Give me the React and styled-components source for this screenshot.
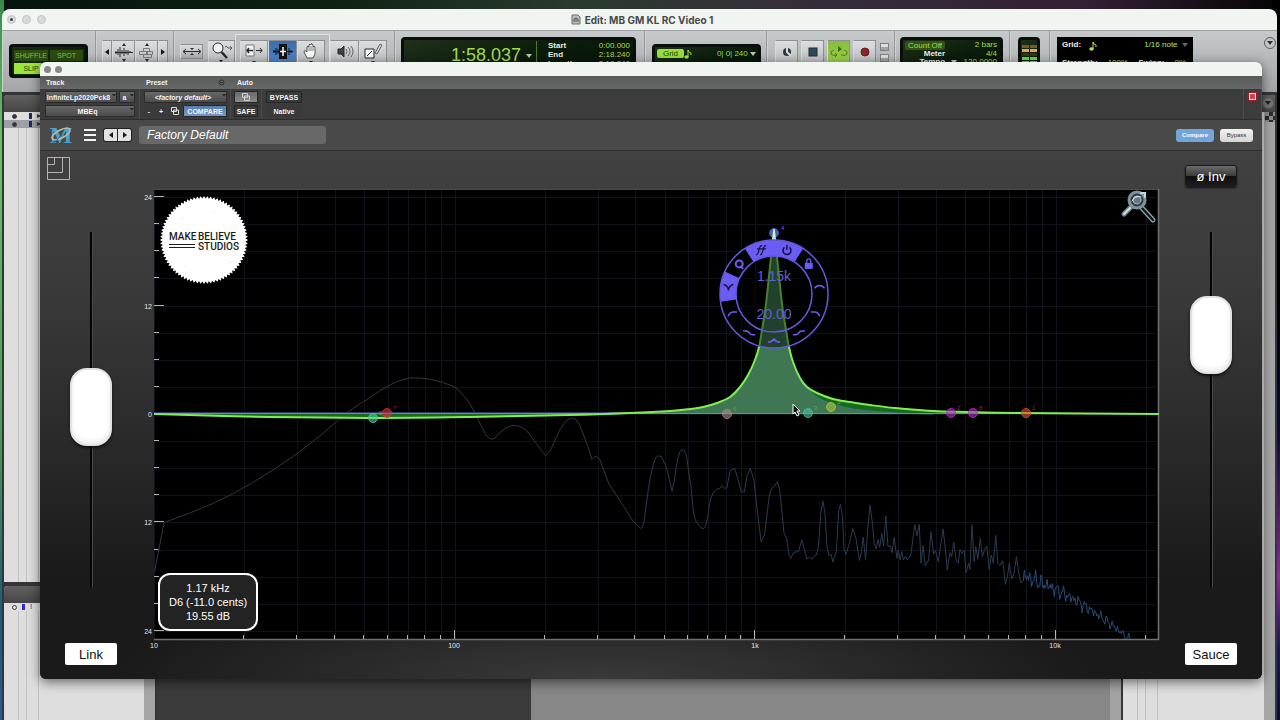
import React from "react";
import styled, { createGlobalStyle, css } from "styled-components";

const GlobalStyle = createGlobalStyle`
    * {
        box-sizing: border-box;
    }
    body {
        margin: 0;
        font-family: "Liberation Sans", Arial, sans-serif;
    }
    button,
    input,
    select {
        margin: 0;
        font-family: inherit;
    }
`;

/* ---------- desktop and windows ---------- */

const Desktop = styled.div`
    position: relative;
    height: 100vh;
    min-height: 480px;
    overflow: hidden;

    background:
        linear-gradient(#3c8a4a, #6cc06a 20%, #4a9a58 60%, #1e5a78 85%, #2a5a96) left / 4px 100% no-repeat,
        linear-gradient(#000 40%, #0b0b38 60%, #7a1a90 76%, #a020a8 80%, #1a1466 90%, #0b0b40) right / 8px 100% no-repeat,
        linear-gradient(90deg, #07140d, #0c2012 25%, #2a3a2e 45%, #35303a 60%, #331f33 85%, #050505) top / 100% 20px no-repeat,
        #101010;
`;
const EditWindow = styled.main`
    position: absolute;
    inset: 9px 3px 0 2px;

    display: flex;
    flex-direction: column;

    border-radius: 8px 8px 0 0;
    overflow: hidden;
`;
const PluginWindow = styled.section`
    position: absolute;
    inset: 62px 18px 41px 40px;

    display: flex;
    flex-direction: column;

    border-radius: 6px;
    overflow: hidden;
    background: #3c3c3c;
    box-shadow: 0 3px 12px rgba(0, 0, 0, 0.55);
`;
const TitleBar = styled.header`
    display: flex;
    align-items: center;
    justify-content: center;
    flex: none;
    height: 21px;

    background: #f0f5f2;
    color: #474a49;
    font-family: Inter, sans-serif;
    font-size: 10px;
    font-weight: 700;
`;
const WindowDots = styled.div`
    display: flex;
    flex: 1;
    gap: 6px;
    padding-left: 5px;
`;
const WindowDot = styled.button`
    width: 9px;
    height: 9px;
    padding: 0;

    display: grid;
    place-items: center;

    border: 1px solid #c0c4c2;
    border-radius: 50%;
    background: #d6dad8;

    &::after {
        content: "";
        width: 3px;
        height: 3px;
        border-radius: 50%;
        background: ${(props) => (props.$marked ? "#444" : "transparent")};
    }
`;
const TitleText = styled.h1`
    display: flex;
    align-items: center;
    gap: 4px;
    margin: 0;
    font-size: inherit;
`;
const TitleSpacer = styled.div`
    flex: 1;
`;

/* ---------- edit window toolbar ---------- */

const EditToolbar = styled.div`
    display: flex;
    flex: none;
    height: 62px;

    border-top: 1px solid #9da1a3;
    background: linear-gradient(#c6cacb, #b4b7b9 50%, #a3a5a7);
`;
const Section = styled.div`
    display: flex;
    align-items: flex-start;
    flex: ${(props) => (props.$grow ? 1 : "none")};
    width: ${(props) => props.$width || "auto"};
    gap: ${(props) => props.$gap || "0"};
    padding: ${(props) => props.$pad || "10px 7px 0"};

    border-right: ${(props) => (props.$grow ? "none" : "1px solid #96999b")};
    box-shadow: inset 1px 0 #cdd0d1;
`;
const Led = styled.div`
    border: 3px solid #0b0f0b;
    border-radius: 4px;
    background: linear-gradient(160deg, #20301a, #0b1c0b 50%, #061206);
    color: #a6dc4e;
    font-size: 8px;
`;
const ModeBox = styled(Led)`
    display: grid;
    grid-template-columns: 36px 1fr;
    width: 81px;
    height: 34px;
    margin-top: 3px;
    padding: 2px 1px;
`;
const ModeButton = styled.button`
    height: 13px;
    padding: 0;

    border: 1px solid #142808;
    background: ${(props) => (props.$on ? "#9be63c" : "#2c4c12")};
    color: ${(props) => (props.$on ? "#1c3a08" : "#86bf3c")};
    font-size: 7px;
    white-space: nowrap;
`;
const ToolButton = styled.button`
    width: ${(props) => props.$width || "23px"};
    height: ${(props) => props.$height || "34px"};
    padding: ${(props) => props.$pad || "2px 0 0"};

    display: flex;
    align-items: flex-start;
    justify-content: center;
    flex: none;

    border: 1px solid #8d9092;
    border-left-color: #d9dcdd;
    background: ${(props) =>
        props.$tone === "blue"
            ? "linear-gradient(#3c6dae, #5a8fcf)"
            : props.$tone === "green"
              ? "linear-gradient(#86bd3a, #a6d850)"
              : "linear-gradient(#dcdedf, #a9acae)"};
    color: #26292b;
`;
const ToolFrame = styled.div`
    display: flex;
    margin-top: -6px;
    padding: 5px 4px 0;

    border: 1px solid #dfe2e3;
    background: #babdbf;
`;
const TrimCell = styled.div`
    flex: 1;
    padding-top: 4px;
`;
const Counter = styled(Led)`
    display: flex;
    width: 100%;
    height: 44px;
    padding: 1px 3px 0 ${(props) => props.$left || "2px"};
`;
const CounterMain = styled.output`
    flex: 1;
    padding: 4px 4px 0 0;

    font-size: 18px;
    line-height: 21px;
    text-align: right;
`;
const SmallArrow = styled.span`
    display: inline-block;
    border: 3px solid transparent;
    border-top: 4px solid ${(props) => props.$color || "#b8c4b0"};
    border-bottom: 0;
    vertical-align: middle;
`;
const CounterList = styled.dl`
    display: grid;
    grid-template-columns: auto auto;
    align-content: start;
    justify-content: space-between;
    width: ${(props) => props.$width || "100%"};
    margin: 0;
    padding: ${(props) => props.$pad || "0"};

    border-left: ${(props) => (props.$line ? "1px solid #4f7a2c" : "none")};
    line-height: ${(props) => (props.$tight ? "8px" : "9px")};

    dt {
        color: #e8ece4;
        font-weight: 700;
        text-align: ${(props) => (props.$tight ? "right" : "left")};
    }
    dd {
        margin: 0;
        text-align: right;
    }
`;
const GridReadout = styled(Led)`
    display: flex;
    align-items: flex-start;
    justify-content: space-between;
    width: 100%;
    height: 34px;
    margin-top: 3px;
    padding: 2px 2px;
    line-height: 9px;
`;
const GridBadge = styled.button`
    width: 27px;
    height: 9px;
    padding: 0;

    border: 0;
    border-radius: 2px;
    background: #97df3e;
    color: #24420c;
    font-size: 8px;
    line-height: 9px;
`;
const TinyBoxes = styled.div`
    display: grid;
    gap: 3px;
    padding: 3px 0 0 1px;

    span {
        width: 9px;
        height: 8px;
        border: 1px solid #7d8082;
        background: linear-gradient(#dcdedf 50%, #a0a3a5 50%);
    }
`;
const CountOff = styled.button`
    display: block;
    height: 9px;
    padding: 0 3px;
    border: 0;
    border-radius: 2px;
    background: #315412;
    color: #a6dc4e;
    font-size: 8px;
    line-height: 9px;
`;
const Meters = styled(Led)`
    display: grid;
    grid-template-columns: 7px 7px;
    grid-auto-rows: 3px;
    gap: 1px;
    justify-content: center;
    width: 22px;
    height: 44px;
    padding-top: 5px;
`;
const MeterCell = styled.i`
    background: ${(props) => props.$color};
`;
const Quantize = styled.div`
    display: grid;
    grid-template-columns: auto 1fr auto;
    align-content: start;
    gap: 8px;
    width: 136px;
    height: 46px;
    padding: 4px 5px;

    background: #000;
    color: #b6e05a;
    font-size: 8px;
    line-height: 8px;

    b {
        color: #f0f0f0;
    }
`;
const QuantizeNote = styled.span`
    text-align: right;
`;
const QuantizeRow = styled.div`
    display: flex;
    justify-content: space-between;
    grid-column: 1 / -1;
    padding-right: 2px;
`;
const RoundMenu = styled.button`
    width: 12px;
    height: 12px;
    margin: 0 0 0 auto;
    padding: 0;

    display: grid;
    place-items: center;

    border: 1px solid #5b5e60;
    border-radius: 50%;
    background: ${(props) => (props.$dark ? "#777" : "#c2c5c6")};
`;

/* ---------- edit window body ---------- */

const EditBody = styled.div`
    display: flex;
    flex: 1;
    min-height: 0;
    gap: 2px;
    padding: 3px 2px 0 2px;
    background: #333537;
`;
const SideColumn = styled.aside`
    display: flex;
    flex-direction: column;
    width: ${(props) => props.$width || "151px"};
    flex: none;
    gap: 4px;
`;
const SidePanel = styled.div`
    display: flex;
    flex-direction: column;
    height: ${(props) => props.$height || "auto"};
    flex: ${(props) => (props.$height ? "none" : "1")};

    border-radius: 4px 0 0 0;
    overflow: hidden;
    background: linear-gradient(90deg, #dedede calc(100% - 11px), #a6a6a6 calc(100% - 11px));
`;
const SideHead = styled.div`
    display: flex;
    height: 17px;
    flex: none;
    padding: 2px 1px 0 0;
    background: linear-gradient(#606060, #464646);
`;
const SideCap = styled.div`
    align-self: flex-end;
    width: 10px;
    height: 10px;
    background: repeating-conic-gradient(#2c2c2c 0 25%, #8c8c8c 0 50%) 0 0 / 8px 8px;
`;
const SideList = styled.div`
    flex: 1;
    background:
        linear-gradient(#c2c2c2, #c2c2c2) 14px 0 / 1px 100% no-repeat,
        linear-gradient(#c2c2c2, #c2c2c2) 22px 0 / 1px 100% no-repeat,
        linear-gradient(#c2c2c2, #c2c2c2) 34px 0 / 1px 100% no-repeat;
`;
const SideRow = styled.div`
    display: flex;
    align-items: center;
    height: 8px;
    padding-left: 8px;
    background: ${(props) => (props.$selected ? "#9ba0a8" : "transparent")};
    color: #333;
    font-size: 8px;
    line-height: 8px;
`;
const RowDot = styled.i`
    width: 5px;
    height: 5px;
    border: 1px solid #444;
    border-radius: 50%;
    background: ${(props) => (props.$hollow ? "transparent" : "#333")};
`;
const RowBar = styled.i`
    width: 3px;
    height: 6px;
    margin: 0 5px 0 ${(props) => (props.$violet ? "5px" : "12px")};
    background: ${(props) => (props.$violet ? "#3a2cc0" : "#1e2f58")};
`;
const Tracks = styled.div`
    flex: 1;
    background: linear-gradient(90deg, #3b3b3b 374px, #878787 374px, #878787 calc(100% - 11px), #a3a3a3 calc(100% - 11px));
`;

/* ---------- plugin header ---------- */

const PluginTitle = styled(TitleBar)`
    height: 14px;
    justify-content: flex-start;
    gap: 4px;
    padding-left: 4px;
`;
const GreyDot = styled.button`
    width: 7px;
    height: 7px;
    padding: 0;
    border: 0;
    border-radius: 50%;
    background: #858887;
`;
const PluginHeader = styled.div`
    display: flex;
    flex: none;
    height: 44px;
    border-bottom: 1px solid #2c2c2c;
`;
const HeaderCol = styled.div`
    width: ${(props) => props.$width || "auto"};
    flex: ${(props) => (props.$width ? "none" : "1")};
    box-shadow: inset -1px 0 #4c4c4c;
`;
const HeaderLabel = styled.h2`
    display: flex;
    align-items: center;
    justify-content: space-between;
    height: 13px;
    margin: 0;
    padding: 0 6px;

    background: linear-gradient(#595b5a, #666967);
    color: #f2f2f2;
    font-size: 7px;
`;
const HeaderRow = styled.div`
    display: flex;
    gap: 2px;
    padding: 2px ${(props) => props.$side || "5px"} 0;
`;
const chip = css`
    height: 12px;
    padding: 0 2px;

    border: 1px solid #2b2b2b;
    border-radius: 1px;
    color: #f4f4f4;
    font-size: 7px;
    font-weight: 700;
    line-height: 9px;
`;
const ChipSelect = styled.select`
    ${chip}
    appearance: none;
    flex: ${(props) => (props.$width ? "none" : "1")};
    width: ${(props) => props.$width || "auto"};
    min-width: 0;
    padding: 0 5px 0 0;
    font-style: ${(props) => (props.$italic ? "italic" : "normal")};
    text-align: center;
    text-align-last: center;
    background:
        linear-gradient(to bottom left, #2c2c2c 50%, transparent 50%) right 2px top 2px / 2px 3px no-repeat,
        linear-gradient(to bottom right, #2c2c2c 50%, transparent 50%) right 0 top 2px / 2px 3px no-repeat,
        linear-gradient(#686868, #4c4c4c);
`;
const ChipButton = styled.button`
    ${chip}
    display: grid;
    place-items: center;
    width: ${(props) => props.$width || "auto"};
    padding: 0;
    background: ${(props) =>
        props.$tone === "blue"
            ? "linear-gradient(#5a7db0, #7899c6)"
            : props.$tone === "light"
              ? "linear-gradient(#6a6a6a, #8a8a8a)"
              : "#3a3a3a"};
    border-color: ${(props) => (props.$bare ? "transparent" : "#262626")};
`;
const RedTarget = styled.button`
    display: grid;
    place-items: center;
    width: 11px;
    height: 11px;
    margin: 2px 4px 0 auto;
    padding: 0;
    border: 2px solid #a01828;
    border-radius: 3px;
    background: #d44050;

    &::after {
        content: "";
        width: 5px;
        height: 5px;
        border: 1px solid #fff;
    }
`;

/* ---------- plugin toolbar ---------- */

const PresetBar = styled.div`
    display: flex;
    align-items: center;
    flex: none;
    height: 31px;
    padding: 0 9px 0 6px;

    border-bottom: 1px solid #303030;
    background: #494949;
`;
const MenuButton = styled.button`
    display: grid;
    gap: 3px;
    width: 12px;
    margin-left: 10px;
    padding: 0;
    border: 0;
    background: none;

    i {
        height: 2px;
        background: #f5f5f5;
    }
`;
const Pager = styled.div`
    display: flex;
    gap: 1px;
    margin-left: 7px;
    padding: 1px;
    border-radius: 3px;
    background: #222;
`;
const PagerButton = styled.button`
    display: grid;
    place-items: center;
    width: 13px;
    height: 12px;
    padding: 0;
    border: 0;
    border-radius: ${(props) => (props.$right ? "0 2px 2px 0" : "2px 0 0 2px")};
    background: #e2e2e2;
`;
const PresetName = styled.input`
    width: 187px;
    height: 18px;
    margin: 0 auto 0 7px;
    padding: 0 8px;

    border: 0;
    border-radius: 3px;
    background: #686868;
    color: #fff;
    font-size: 12px;
    font-style: italic;
`;
const PillButton = styled.button`
    height: 13px;
    width: ${(props) => (props.$blue ? "38px" : "33px")};
    margin-left: ${(props) => (props.$blue ? "0" : "6px")};
    padding: 0;

    border: 0;
    border-radius: 3px;
    background: ${(props) => (props.$blue ? "#74a5da" : "linear-gradient(#f2f2f2, #d4d4d4)")};
    color: ${(props) => (props.$blue ? "#fff" : "#333")};
    font-size: 6px;
    font-weight: ${(props) => (props.$blue ? 700 : 400)};
`;

/* ---------- equaliser ---------- */

const Equaliser = styled.div`
    display: grid;
    grid-template-columns: 100px 1fr 100px;
    flex: 1;
    min-height: 0;

    background:
        radial-gradient(ellipse 40% 90px at 46% 100%, #3a3a3a, transparent),
        linear-gradient(#414141, #3a3a3a 25%, #2a2a2a 55%, #1a1a1a 80%);
`;
const ControlColumn = styled.div`
    display: flex;
    flex-direction: column;
    align-items: center;
    padding: ${(props) => (props.$top ? "14px 2px 14px 0" : "6px 0 14px 2px")};
`;
const ResizeButton = styled.button`
    align-self: flex-start;
    width: 23px;
    height: 23px;
    margin-left: 5px;
    padding: 0;
    border: 0;
    background: none;
    line-height: 0;
`;
const InvertButton = styled.button`
    width: 52px;
    height: 22px;
    padding: 0;

    border: 1px solid #1c1c1c;
    border-radius: 3px;
    background: linear-gradient(#6a6a6a, #3a3a3a 50%, #101010 52%, #1c1c1c);
    color: #fff;
    font-size: 13px;
    box-shadow: 0 1px 2px #111;
`;
const Fader = styled.input`
    flex: 1;
    min-height: 0;
    width: 42px;
    margin: ${(props) => (props.$low ? "52px 0 56px" : "45px 0 56px")};

    appearance: none;
    writing-mode: vertical-lr;
    direction: rtl;
    background: linear-gradient(90deg, #050505 2px, #4a4a4a 2px) center / 3px 100% no-repeat;

    &::-webkit-slider-thumb {
        appearance: none;
        width: 42px;
        height: 78px;
        border: 2px solid #e2e2e2;
        border-radius: 17px;
        background: #fff;
        box-shadow: inset 0 -3px 4px #ececec, 0 2px 3px #111;
    }
`;
const LabelButton = styled.button`
    width: 52px;
    height: 22px;
    padding: 0;

    border: 0;
    border-radius: 2px;
    background: #fff;
    color: #111;
    font-size: 13px;
`;
const GraphArea = styled.div`
    position: relative;
    min-width: 0;
    padding-top: 34px;

    > svg {
        display: block;
        width: 100%;
        height: auto;
    }
`;
/* readout floats over the lower left of the graph */
const Readout = styled.output`
    position: absolute;
    left: 18px;
    bottom: 48px;
    padding: 6px 9px;

    border: 2px solid #fff;
    border-radius: 12px;
    background: #232323;
    color: #fff;
    font-size: 11px;
    line-height: 14px;
    text-align: center;
    white-space: pre;
`;

/* ---------- graph ---------- */

const PLOT = { left: 14, right: 1019, top: 4, bottom: 454 };
const freqX = (hz) => 14 + 300.5 * Math.log10(hz / 10);
const gainY = (db) => 229 - 9.04 * db;

const FREQS = [10, 100, 1000, 10000].flatMap((base) =>
    [1, 2, 3, 4, 5, 6, 7, 8, 9].map((n) => n * base).filter((hz) => hz <= 20000),
);
const GAINS = Array.from({ length: 17 }, (_, i) => 24 - i * 3);

const LOW_SPECTRUM =
    "M44 635 L72 488 Q150 460 220 430 Q330 380 470 282 Q540 230 605 172 L625 155 Q660 130 680 120 Q760 60 810 54 Q870 50 943 80 Q980 110 1000 150 Q1015 180 1035 220 Q1055 255 1075 222 Q1120 175 1160 212 Q1200 265 1217 287 Q1230 280 1245 240 Q1296 125 1325 210 Q1345 260 1356 298 Q1368 280 1380 300 L1407 372 L1452 440 L1480 485 L1503 506";

const HIGH_SPECTRUM =
    "M2 446 Q12 440 15 400 Q35 228 52 228 L62 229 Q75 255 80 275 L93 334 L100 300 Q110 212 122 208 Q135 205 140 265 L148 320 L155 395 Q160 425 168 432 Q182 455 190 440 Q196 420 202 370 Q210 332 225 327 L232 325 L238 318 L245 325 L252 324 L262 272 L275 265 L285 300 L293 334 L303 337 L310 290 L320 265 L331 300 L338 370 L345 430 L352 486 L362 462 L375 350 Q382 318 390 320 L398 306 Q404 315 408 350 L418 460 L426 475 L433 525 L438 535 L446 517 L460 515 L470 480 L478 510 L484 537 L492 532 L500 538 L507 527 L512 525 L518 500 L525 400 L531 363 L537 400 L543 500 L549 528 L555 523 L560 546 L570 515 L577 390 L582 373 L588 410 L592 505 L598 523 L608 490 L618 445 L627 475 L637 542 L643 515 L648 472 L655 538 L661 450 L668 375 L675 430 L680 490 L686 506 L691 478 L696 502 L702 460 L707 498 L714 408 L720 500 L727 497 L732 518 L738 472 L746 535 L750 510 L755 540 L760 514 L765 540 L771 528 L776 540 L786 528 L792 480 L798 434 L804 468 L811 433 L816 550 L822 497 L828 558 L838 540 L845 455 L852 523 L858 512 L866 545 L880 447 L887 510 L892 570 L900 518 L905 530 L911 487 L918 540 L924 550 L929 508 L935 520 L941 510 L947 578 L954 550 L958 568 L964 434 L970 545 L975 500 L981 538 L988 475 L994 530 L1000 510 L1007 498 L1014 569 L1020 525 L1026 550 L1033 465 L1039 550 L1046 556 L1053 542 L1061 613 L1067 590 L1072 550 L1080 597 L1086 580 L1093 530 L1099 572 L1105 608 L1110 606";

// dense tail above 8 kHz, falling off the bottom of the plot
function tailPath() {
    let d = "M1110 606";
    for (let i = 1; i <= 105; i++) {
        const x = 1110 + i * 3;
        const t = i / 105;
        const base = 587 + 110 * t + 84 * t * t;
        const noise = Math.sin(i * 2.3) * 13 + Math.sin(i * 5.1 + 1) * 15 + Math.sin(i * 0.9) * 9;
        d += ` L${x} ${(base + noise * (1 - t * 0.55)).toFixed(1)}`;
    }
    return d;
}

// Catmull-Rom spline through the points, as cubic segments
function smooth(points) {
    let d = `M${points[0].join(" ")}`;
    for (let i = 0; i < points.length - 1; i++) {
        const p0 = points[i - 1] || points[i];
        const p1 = points[i];
        const p2 = points[i + 1];
        const p3 = points[i + 2] || p2;
        d += ` C${p1[0] + (p2[0] - p0[0]) / 6} ${p1[1] + (p2[1] - p0[1]) / 6}`;
        d += ` ${p2[0] - (p3[0] - p1[0]) / 6} ${p2[1] - (p3[1] - p1[1]) / 6} ${p2[0]} ${p2[1]}`;
    }
    return d;
}

const DIP = [[14, 229], [130, 232], [233, 233], [330, 232], [430, 230], [490, 228], [530, 226]];
const RISE = [[550, 224], [563, 222], [577, 218], [590, 212], [600, 202], [608, 190], [615, 175], [619, 162], [622, 145], [626, 119], [631, 72], [634, 45]];
const FALL = [[637, 72], [642, 119], [646, 145], [649, 162], [653, 177], [660, 193], [667, 202], [677, 208], [693, 214], [710, 217], [730, 220], [755, 223], [793, 226], [827, 227], [880, 228], [1019, 229]];
const INNER_FALL = [[637, 72], [642, 119], [646, 147], [649, 164], [653, 179], [659, 193], [665, 201], [672, 208], [680, 214], [696, 220], [720, 225], [758, 228], [793, 229]];

const NODES = [
    { x: 233, y: 233, color: "#4fc9a2", tag: "9" },
    { x: 247, y: 228, color: "#d8304a", tag: "7" },
    { x: 587, y: 229, color: "#a58a86", tag: "6" },
    { x: 668, y: 228, color: "#45c39c", tag: "3" },
    { x: 691, y: 222, color: "#a9c93e", tag: "5" },
    { x: 811, y: 228, color: "#b030c8", tag: "2" },
    { x: 833, y: 228, color: "#b030c8", tag: "8" },
    { x: 886, y: 228, color: "#d8502c", tag: "1" },
];

const STEP = 360 / 11;
function polar(r, deg) {
    const a = ((deg - 90) * Math.PI) / 180;
    return `${(r * Math.cos(a)).toFixed(2)} ${(r * Math.sin(a)).toFixed(2)}`;
}
function sector(from, to) {
    return `M${polar(54, from)} A54 54 0 0 1 ${polar(54, to)} L${polar(38, to)} A38 38 0 0 0 ${polar(38, from)} Z`;
}
const SHAPES = [
    { slot: 2, d: "M-5 1 Q-3 -2 0 -2 Q3 -2 5 1" },
    { slot: 3, d: "M-5 -1 H-1 Q2 -1 4 3" },
    { slot: 4, d: "M-6 2 H-3 Q-1 2 0 0 Q1 -2 6 -2" },
    { slot: 5, d: "M-6 2 Q-2 2 0 -1 Q2 2 6 2" },
    { slot: 6, d: "M6 2 H3 Q1 2 0 0 Q-1 -2 -6 -2" },
    { slot: 7, d: "M5 -1 H1 Q-2 -1 -4 3" },
];

function Ring() {
    const at = (slot) => `translate(${polar(46, (slot + 0.5) * STEP)})`;
    return (
        <g transform="translate(634 109)">
            <circle r="54" fill="#000" fillOpacity="0.45" />
            <g fill="#6b5cf4">
                <path d={sector(-STEP, STEP)} />
                <path d={sector(-3 * STEP, -2 * STEP)} />
            </g>
            <circle r="54" fill="none" stroke="#6658dc" strokeWidth="1.5" />
            <circle r="38" fill="none" stroke="#6658dc" strokeWidth="1.5" />
            <g fill="none" stroke="#6b5cf4" strokeWidth="1.5">
                {SHAPES.map((shape) => (
                    <path key={shape.slot} d={shape.d} transform={at(shape.slot)} />
                ))}
            </g>
            <path d="M-5 -3 Q-1 -2 0 2 Q1 -2 5 -3 M0 0 V3" transform={at(8)} fill="none" stroke="#17123c" strokeWidth="1.5" />
            <g transform={at(9)} fill="none" stroke="#6b5cf4" strokeWidth="2">
                <circle r="3.5" />
                <path d="M1 2 L4 5" />
            </g>
            <g transform={at(10)} fill="none" stroke="#17123c" strokeWidth="1.2">
                <path d="M-5 5 Q-3 5 -2 0 Q-1 -5 1 -4 M-4 -1 H1 M-1 5 Q1 5 2 0 Q3 -5 5 -4 M0 -1 H5" />
            </g>
            <g transform={at(0)} fill="none" stroke="#17123c" strokeWidth="1.5">
                <path d="M-2.5 -2.5 A4 4 0 1 0 2.5 -2.5 M0 -5 V0" />
            </g>
            <g transform={at(1)}>
                <rect x="-4" y="-1" width="8" height="6" fill="#6b5cf4" />
                <path d="M-2 -1 V-3 A2 2 0 0 1 2 -3 V-1" fill="none" stroke="#6b5cf4" strokeWidth="1.3" />
            </g>
            <g fill="#5f61cf" fontSize="14" textAnchor="middle">
                <text y="-13">1.15k</text>
                <text y="25">20.00</text>
            </g>
        </g>
    );
}

function StudioBadge() {
    const teeth = Array.from({ length: 160 }, (_, i) => polar(i % 2 ? 41.5 : 44, (i * 360) / 160)).join(" ");
    return (
        <g transform="translate(64 55)">
            <polygon points={teeth} fill="#fff" />
            <g fill="#1d1d1d" fontFamily="Roboto, sans-serif" fontSize="10" fontWeight="500">
                <text x="-35" y="0">MAKE</text>
                <text x="-6" y="0">BELIEVE</text>
                <text x="-6" y="10">STUDIOS</text>
            </g>
            <path d="M-35 4.5 H-9 M-35 7.5 H-9" stroke="#1d1d1d" strokeWidth="1" />
            <g fill="#e4e4e4">
                <circle cx="-22" cy="-22" r="0.7" />
                <circle cx="10" cy="-28" r="0.6" />
                <circle cx="26" cy="22" r="0.8" />
                <circle cx="-18" cy="26" r="0.7" />
                <circle cx="4" cy="32" r="0.6" />
            </g>
        </g>
    );
}

function Graph() {
    return (
        <svg viewBox="0 0 1022 470" role="img" aria-label="Equaliser response">
            <defs>
                <clipPath id="plot">
                    <rect x={PLOT.left} y={PLOT.top} width={1005} height={450} />
                </clipPath>
            </defs>
            <rect x={PLOT.left} y={PLOT.top} width={1005} height={450} fill="#000" />
            <g stroke="#11131a">
                {FREQS.map((hz) => (
                    <path key={hz} d={`M${Math.round(freqX(hz)) + 0.5} 4 V454`} />
                ))}
                {GAINS.map((db) => (
                    <path key={db} d={`M14 ${Math.round(gainY(db)) + 0.5} H1016`} />
                ))}
            </g>
            <path d="M14 4.5 H1019" stroke="#4a4a4a" />
            <path d="M14 454.5 H1018.5 V4" fill="none" stroke="#707070" strokeWidth="1.5" />
            <g stroke="#b4b4b4">
                {FREQS.slice(1).map((hz) => (
                    <path
                        key={hz}
                        d={`M${Math.round(freqX(hz)) - 0.5} 454 v${Number.isInteger(Math.log10(hz)) ? -9 : -4}`}
                    />
                ))}
                {GAINS.map((db) => (
                    <path key={db} d={`M14 ${Math.round(gainY(db)) - 0.5} h${db % 12 === 0 ? 10 : 5}`} />
                ))}
            </g>
            <g fill="#e4e4e4" fontSize="7">
                {[24, 12, 0, -12, -24].map((db) => (
                    <text key={db} x="12" y={gainY(db) + 3} textAnchor="end">
                        {Math.abs(db)}
                    </text>
                ))}
                <text x="14" y="463" textAnchor="middle">10</text>
                <text x="314" y="463" textAnchor="middle">100</text>
                <text x="615" y="463" textAnchor="middle">1k</text>
                <text x="915" y="463" textAnchor="middle">10k</text>
            </g>
            <g clipPath="url(#plot)" fill="none">
                <path d={LOW_SPECTRUM} transform="translate(0 175) scale(.3333)" stroke="#33373b" vectorEffect="non-scaling-stroke" />
                <path d={HIGH_SPECTRUM} transform="translate(500 195) scale(.3444 .3333)" stroke="#2b3b50" vectorEffect="non-scaling-stroke" />
                <path d={tailPath()} transform="translate(500 195) scale(.3444 .3333)" stroke="#2b4a75" vectorEffect="non-scaling-stroke" />
            </g>
            <path d={`${smooth([...DIP, ...RISE, ...FALL])} Z`} fill="#176a1c" />
            <path d={`${smooth([[420, 229], [490, 228], [530, 226], ...RISE, ...INNER_FALL])} Z`} fill="#3f7753" />
            <path d={smooth(INNER_FALL.slice(4))} fill="none" stroke="#3b7a86" />
            <path d="M14 227.5 H520" stroke="#34346c" />
            <path d="M14 228.5 H1019" stroke="#84848e" />
            <path d={smooth([...DIP, ...RISE])} fill="none" stroke="#7fee55" strokeWidth="2" />
            <path d={smooth([[634, 45], ...FALL])} fill="none" stroke="#7fee55" strokeWidth="2" />
            {NODES.map((node) => (
                <g key={node.x} fill={node.color}>
                    <circle cx={node.x} cy={node.y} r="4.5" fillOpacity="0.6" stroke={node.color} strokeOpacity="0.8" />
                    <text x={node.x + 6} y={node.y - 3} fontSize="6" opacity="0.7">
                        {node.tag}
                    </text>
                </g>
            ))}
            <Ring />
            <circle cx="634" cy="48" r="4.5" fill="#6a8ad8" fillOpacity="0.7" stroke="#4d5cc0" />
            <path d="M633 54 L634 44 L635 54" fill="none" stroke="#c4f0dc" strokeWidth="1.5" />
            <text x="641" y="45" fontSize="6" fill="#6b5cf4">4</text>
            <path d="M653 219 V229 L655 227 L657 231 L659 230 L657 226 H660 Z" fill="#111" stroke="#fff" strokeWidth="1" />
            <StudioBadge />
            <g transform="translate(997 15)" fill="none" strokeLinecap="round">
                <path d="M-6 7 L-13 14" stroke="#74868e" strokeWidth="5" />
                <path d="M-7 8 L-13 14" stroke="#d2dee2" strokeWidth="2" />
                <path d="M5 8 L16 20" stroke="#8fa4ae" strokeWidth="5" />
                <path d="M5 8 L16 20" stroke="#10181c" strokeWidth="2.5" />
                <circle r="8" fill="#2b3a42" stroke="#7d949e" strokeWidth="3" />
                <circle r="4" fill="#66787f" stroke="#a8bac0" strokeWidth="1" />
                <path d="M4 -7 H8 V-3" stroke="#c8d8de" strokeWidth="2" />
                <path d="M-5 1 Q-2 -5 4 -3" stroke="#e6f0f4" />
            </g>
        </svg>
    );
}

/* ---------- small icons ---------- */

function Icon({ w = 20, h = 20, children }) {
    return (
        <svg width={w} height={h} viewBox={`0 0 ${w} ${h}`} fill="none" stroke="currentColor" aria-hidden="true">
            {children}
        </svg>
    );
}
const downTip = "M8 18 h4 l-2 2.5 Z";

function WaveIcon() {
    return (
        <Icon h={22}>
            <path d="M2 8 V11 M4 6 V12 M6 4 V14 M8 7 V11 M10 5 V13 M12 7 V11 M14 7 V12 M16 8 V10 M1 9.5 H19" />
            <path d="M8 3 L10 0 L12 3 Z" fill="currentColor" stroke="none" />
            <path d="M8 16 h4 l-2 3 Z" fill="currentColor" stroke="none" />
        </Icon>
    );
}
function BlocksIcon({ color = "currentColor" }) {
    return (
        <svg width="10" height="8" viewBox="0 0 10 8" fill="none" stroke={color} aria-hidden="true">
            <path d="M1.5 0.5 H6.5 V4.5 H1.5 Z M3.5 3 H8.5 V7.5 H3.5 Z" />
        </svg>
    );
}
function Note({ color }) {
    return (
        <svg width="8" height="10" viewBox="0 0 8 10" fill={color} stroke={color} aria-hidden="true">
            <ellipse cx="2.5" cy="8" rx="1.8" ry="1.2" />
            <path d="M4 8 V1 Q4 3 7 4 V6" fill="none" />
        </svg>
    );
}
function Triangle({ left }) {
    return (
        <svg width="4" height="6" viewBox="0 0 4 6" fill="#181818" aria-hidden="true">
            <path d={left ? "M4 0 V6 L0 3 Z" : "M0 0 V6 L4 3 Z"} />
        </svg>
    );
}

function EditBar() {
    return (
        <EditToolbar>
            <Section $width="94px">
                <ModeBox>
                    <ModeButton>SHUFFLE</ModeButton>
                    <ModeButton>SPOT</ModeButton>
                    <ModeButton $on>SLIP</ModeButton>
                    <ModeButton $on>GRID</ModeButton>
                </ModeBox>
            </Section>
            <Section $width="78px" $pad="9px 6px 0">
                <ToolButton $width="10px" $pad="8px 0 0" aria-label="Zoom out"><Triangle left /></ToolButton>
                <ToolButton aria-label="Waveform zoom"><WaveIcon /></ToolButton>
                <ToolButton aria-label="Clip zoom">
                    <Icon h={22}>
                        <path d="M2.5 8.5 h8 v3 h-8 z M6.5 5.5 h6 v3 h-6 z M9.5 8.5 h6 v3 h-6 z M6.5 11.5 h8 v3 h-8 z" stroke="#777a7c" />
                        <path d="M8 3 L10 0 L12 3 Z M8 16 h4 l-2 3 Z" fill="currentColor" stroke="none" />
                    </Icon>
                </ToolButton>
                <ToolButton $width="10px" $pad="8px 0 0" aria-label="Zoom in"><Triangle /></ToolButton>
            </Section>
            <Section $width="221px" $pad="9px 7px 0 6px">
                <TrimCell>
                    <ToolButton $width="23px" $height="15px" $pad="2px 0 0" aria-label="Trim range">
                        <Icon h={9}>
                            <path d="M2 4.5 H18 M4 2 L1 4.5 L4 7 M16 2 L19 4.5 L16 7" />
                            <path d="M8 1 H12 L10 3 Z M8 8 H12 L10 6 Z" fill="currentColor" stroke="none" />
                        </Icon>
                    </ToolButton>
                </TrimCell>
                <ToolButton $width="27px" aria-label="Zoomer" $pad="1px 0 0">
                    <Icon w={22} h={21}>
                        <circle cx="7" cy="6" r="5" fill="#f4f4f4" />
                        <path d="M10.5 10 L16 16" strokeWidth="2.5" />
                        <path d="M14 5 Q16 3 17 6 H21 M19 4 L21 6 L19 8" stroke="#5a5d5f" />
                        <path d={downTip} fill="currentColor" stroke="none" />
                    </Icon>
                </ToolButton>
                <ToolFrame>
                    <ToolButton $width="28px" aria-label="Trimmer">
                        <Icon h={21}>
                            <path d="M2 2 H10 V13 H2 Z" fill="#f6f6f6" stroke="#777" />
                            <path d="M9 7.5 H3 M5 5 L3 7.5 L5 10" strokeWidth="1.5" />
                            <path d="M12 7.5 H18 M16 5 L18 7.5 L16 10" />
                            <path d={downTip} fill="currentColor" stroke="none" />
                        </Icon>
                    </ToolButton>
                    <ToolButton $width="29px" $tone="blue" aria-label="Selector">
                        <Icon h={21}>
                            <rect x="6" y="1" width="8" height="15" fill="#111" stroke="none" />
                            <path d="M1 7 V10 M3 5 V12 M5 6 V11 M16 5 V12 M18 7 V10 M0 8.5 H20" stroke="#111" />
                            <path d="M10 4 V13 M7 8.5 H13" stroke="#fff" strokeWidth="1.5" />
                        </Icon>
                    </ToolButton>
                    <ToolButton $width="28px" aria-label="Grabber">
                        <Icon h={21}>
                            <path d="M6 15 L3 9 Q3 7 5 8 L6 9 V4 Q7 2 8 4 V2 Q9 0 10 2 V1 Q11 0 12 2 V4 Q13 2 14 4 V11 L12 15 Z" fill="#fafafa" stroke="#555" />
                            <path d="M8 4 V8 M10 3 V8 M12 4 V8" stroke="#777" />
                            <path d={downTip} fill="currentColor" stroke="none" />
                        </Icon>
                    </ToolButton>
                </ToolFrame>
                <ToolButton $width="29px" aria-label="Scrubber">
                    <Icon h={21}>
                        <path d="M3 6 H6 L9 3 V14 L6 11 H3 Z" fill="#444" />
                        <path d="M11 6 Q13 8.5 11 11 M13 4 Q17 8.5 13 13 M16 3 Q20 8.5 16 14" stroke="#5d6062" />
                    </Icon>
                </ToolButton>
                <ToolButton $width="28px" aria-label="Pencil">
                    <Icon h={21}>
                        <path d="M2 6 H11 V15 H2 Z" fill="#f6f6f6" />
                        <path d="M4 13 L9 8" />
                        <path d="M12 10 L17 1 L19 2 L14 11 Z" stroke="#666" />
                        <path d={downTip} fill="currentColor" stroke="none" />
                    </Icon>
                </ToolButton>
            </Section>
            <Section $width="250px" $pad="6px 8px 0 6px">
                <Counter $left="12px">
                    <CounterMain>1:58.037 <SmallArrow /></CounterMain>
                    <CounterList $width="94px" $pad="0 0 0 11px" $line>
                        <dt>Start</dt>
                        <dd>0:00.000</dd>
                        <dt>End</dt>
                        <dd>2:18.240</dd>
                        <dt>Length</dt>
                        <dd>2:18.240</dd>
                    </CounterList>
                </Counter>
            </Section>
            <Section $width="122px" $pad="10px 5px 0 7px">
                <GridReadout>
                    <GridBadge>Grid</GridBadge>
                    <Note color="#a6dc4e" />
                    <TitleSpacer />
                    <span>0| 0| 240 <SmallArrow /></span>
                </GridReadout>
            </Section>
            <Section $width="128px" $pad="9px 4px 0 8px" $gap="3px">
                <ToolButton aria-label="Online">
                    <Icon h={19}>
                        <circle cx="10" cy="9" r="4" fill="#2d3942" stroke="none" />
                        <path d="M10 4 V9 L14 13" stroke="#ddd" strokeWidth="2" />
                    </Icon>
                </ToolButton>
                <ToolButton aria-label="Stop">
                    <Icon h={19}><rect x="6" y="5" width="8" height="8" fill="#2f4a60" /></Icon>
                </ToolButton>
                <ToolButton $tone="green" aria-label="Loop">
                    <Icon h={19}>
                        <path d="M5 7 Q1 8 2 11 Q3 13 8 12 M15 7 Q19 8 18 11 Q17 13 12 12 M6 10 L8 12 L6 14" stroke="#4d7a1c" />
                        <path d="M9 9 V3 L13 6 Z" fill="#3c6618" stroke="none" />
                    </Icon>
                </ToolButton>
                <ToolButton aria-label="Record">
                    <Icon h={19}><circle cx="10" cy="9" r="4" fill="#8c2430" stroke="#6a1a24" /></Icon>
                </ToolButton>
                <TinyBoxes>
                    <span />
                    <span />
                </TinyBoxes>
            </Section>
            <Section $width="115px" $pad="6px 6px 0 5px">
                <Counter>
                    <CounterList $tight>
                        <dt><CountOff>Count Off</CountOff></dt>
                        <dd>2 bars</dd>
                        <dt>Meter</dt>
                        <dd>4/4</dd>
                        <dt>Tempo</dt>
                        <dd><SmallArrow /> &nbsp; 120.0000</dd>
                    </CounterList>
                </Counter>
            </Section>
            <Section $width="40px" $pad="6px 8px 0">
                <Meters>
                    {["#7a5a20", "#7a5a20", "#e0a84c", "#e0a84c", "#3a3218", "#3a3218", "#55e03c", "#55e03c", "#55e03c", "#55e03c"].map(
                        (color, i) => (
                            <MeterCell key={i} $color={color} />
                        ),
                    )}
                </Meters>
            </Section>
            <Section $grow $pad="6px 1px 0 7px">
                <Quantize>
                    <b>Grid:</b>
                    <Note color="#b6e05a" />
                    <QuantizeNote>1/16 note &nbsp;<SmallArrow $color="#666" /></QuantizeNote>
                    <QuantizeRow>
                        <b>Strength:</b>
                        <span>100%</span>
                        <b>Swing:</b>
                        <span>0%</span>
                    </QuantizeRow>
                </Quantize>
                <RoundMenu aria-label="Toolbar menu"><SmallArrow $color="#333" /></RoundMenu>
            </Section>
        </EditToolbar>
    );
}

function PluginTop() {
    return (
        <PluginHeader>
            <HeaderCol $width="100px">
                <HeaderLabel>Track</HeaderLabel>
                <HeaderRow>
                    <ChipSelect aria-label="Track"><option>InfiniteLp2020Pck8</option></ChipSelect>
                    <ChipSelect aria-label="Insert" $width="16px"><option>a</option></ChipSelect>
                </HeaderRow>
                <HeaderRow>
                    <ChipSelect aria-label="Plugin"><option>MBEq</option></ChipSelect>
                </HeaderRow>
            </HeaderCol>
            <HeaderCol $width="91px">
                <HeaderLabel>
                    Preset
                    <Icon w={7} h={7}><circle cx="3.5" cy="3.5" r="2.5" stroke="#333" /><path d="M2 3.5 H5" stroke="#333" /></Icon>
                </HeaderLabel>
                <HeaderRow $side="4px">
                    <ChipSelect aria-label="Preset" $italic><option>&lt;factory default&gt;</option></ChipSelect>
                </HeaderRow>
                <HeaderRow $side="4px">
                    <ChipButton $bare $width="10px">-</ChipButton>
                    <ChipButton $bare $width="10px">+</ChipButton>
                    <ChipButton $bare $width="13px" aria-label="Copy settings"><BlocksIcon color="#ddd" /></ChipButton>
                    <ChipButton $tone="blue" $width="44px">COMPARE</ChipButton>
                </HeaderRow>
            </HeaderCol>
            <HeaderCol $width="31px">
                <HeaderLabel>Auto</HeaderLabel>
                <HeaderRow $side="3px"><ChipButton $tone="light" $width="24px" aria-label="Automation"><BlocksIcon color="#ccc" /></ChipButton></HeaderRow>
                <HeaderRow $side="3px"><ChipButton $width="24px">SAFE</ChipButton></HeaderRow>
            </HeaderCol>
            <HeaderCol>
                <HeaderLabel aria-hidden="true" />
                <HeaderRow $side="4px"><ChipButton $width="36px">BYPASS</ChipButton></HeaderRow>
                <HeaderRow $side="4px"><ChipButton $bare $width="36px">Native</ChipButton></HeaderRow>
            </HeaderCol>
            <HeaderCol $width="18px">
                <HeaderLabel aria-hidden="true" />
                <RedTarget aria-label="Target" />
            </HeaderCol>
        </PluginHeader>
    );
}

function PresetToolbar() {
    return (
        <PresetBar>
            <svg width="28" height="24" viewBox="0 0 28 24" aria-label="M logo">
                <text x="15" y="20" textAnchor="middle" fontFamily="Liberation Serif, serif" fontWeight="700" fontSize="24" fill="#48a4cc">M</text>
                <ellipse cx="15" cy="11" rx="10" ry="4" fill="none" stroke="#c0b9a6" strokeWidth="1.5" transform="rotate(-28 15 11)" />
                <path d="M6 20 Q13 18 18 6" stroke="#2c6c8c" fill="none" />
            </svg>
            <MenuButton aria-label="Menu">
                <i />
                <i />
                <i />
            </MenuButton>
            <Pager>
                <PagerButton aria-label="Previous preset"><Triangle left /></PagerButton>
                <PagerButton $right aria-label="Next preset"><Triangle /></PagerButton>
            </Pager>
            <PresetName aria-label="Preset name" defaultValue="Factory Default" />
            <PillButton $blue>Compare</PillButton>
            <PillButton>Bypass</PillButton>
        </PresetBar>
    );
}

function App() {
    const [link, setLink] = React.useState(51);
    const [sauce, setSauce] = React.useState(77);

    return (
        <Desktop>
            <GlobalStyle />
            <EditWindow>
                <TitleBar>
                    <WindowDots>
                        <WindowDot $marked aria-label="Close" />
                        <WindowDot aria-label="Minimise" />
                        <WindowDot aria-label="Zoom" />
                    </WindowDots>
                    <TitleText>
                        <Icon w={10} h={11}>
                            <path d="M1 1 H7 L9 3 V10 H1 Z" fill="#b9bdbb" stroke="#6b6e6d" />
                            <path d="M3 8 V5 Q5 3 7 5 V8 M5 8 V5" stroke="#555" />
                        </Icon>
                        Edit: MB GM KL RC Video 1
                    </TitleText>
                    <TitleSpacer />
                </TitleBar>
                <EditBar />
                <EditBody>
                    <SideColumn>
                        <SidePanel $height="487px">
                            <SideHead />
                            <SideRow><RowDot /><RowBar />▸</SideRow>
                            <SideRow $selected><RowDot /><RowBar />▸</SideRow>
                            <SideList />
                        </SidePanel>
                        <SidePanel>
                            <SideHead />
                            <SideRow><RowDot $hollow /><RowBar $violet />!</SideRow>
                            <SideList />
                        </SidePanel>
                    </SideColumn>
                    <Tracks />
                    <SideColumn $width="152px">
                        <SidePanel>
                            <SideHead><RoundMenu $dark aria-label="List menu"><SmallArrow $color="#222" /></RoundMenu></SideHead>
                            <SideCap />
                            <SideList />
                        </SidePanel>
                    </SideColumn>
                </EditBody>
            </EditWindow>

            <PluginWindow>
                <PluginTitle>
                    <GreyDot aria-label="Close plugin" />
                    <GreyDot aria-label="Minimise plugin" />
                </PluginTitle>
                <PluginTop />
                <PresetToolbar />
                <Equaliser>
                    <ControlColumn>
                        <ResizeButton aria-label="Resize">
                            <Icon w={23} h={23}>
                                <path d="M0.5 0.5 H22.5 V22.5 H0.5 Z M15.5 0.5 V15.5 H0.5 M7.5 0.5 V7.5 H0.5" stroke="#b4b4b4" />
                            </Icon>
                        </ResizeButton>
                        <Fader
                            $low
                            type="range"
                            aria-label="Link amount"
                            value={link}
                            onChange={(e) => setLink(Number(e.target.value))}
                        />
                        <LabelButton>Link</LabelButton>
                    </ControlColumn>
                    <GraphArea>
                        <Graph />
                        <Readout>{"1.17 kHz\nD6 (-11.0 cents)\n19.55 dB"}</Readout>
                    </GraphArea>
                    <ControlColumn $top>
                        <InvertButton>ø Inv</InvertButton>
                        <Fader
                            type="range"
                            aria-label="Sauce amount"
                            value={sauce}
                            onChange={(e) => setSauce(Number(e.target.value))}
                        />
                        <LabelButton>Sauce</LabelButton>
                    </ControlColumn>
                </Equaliser>
            </PluginWindow>
        </Desktop>
    );
}

export default App;
